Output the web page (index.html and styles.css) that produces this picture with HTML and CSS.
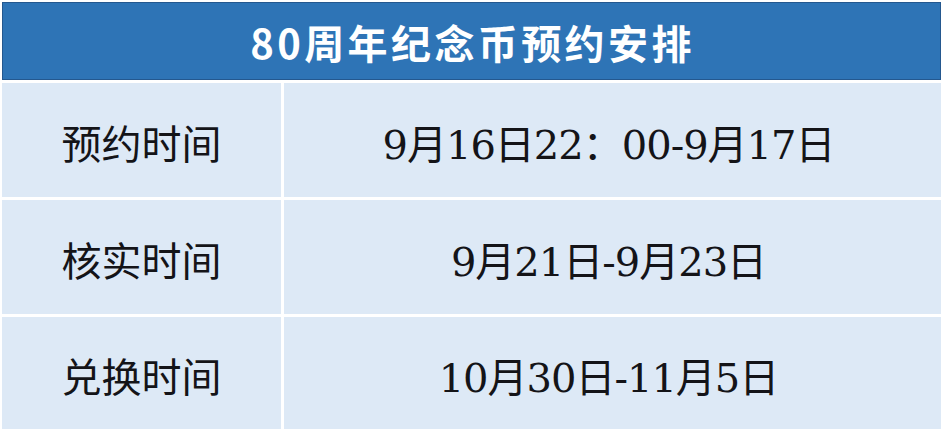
FILE: index.html
```html
<!DOCTYPE html>
<html lang="zh">
<head>
<meta charset="utf-8">
<title>80周年纪念币预约安排</title>
<link rel="stylesheet" href="styles.css">
</head>
<body>
<div class="table">
  <div class="header">80周年纪念币预约安排</div>
  <div class="cell label">预约时间</div>
  <div class="cell value">9月16日22：00-9月17日</div>
  <div class="cell label">核实时间</div>
  <div class="cell value">9月21日-9月23日</div>
  <div class="cell label">兑换时间</div>
  <div class="cell value">10月30日-11月5日</div>
</div>
</body>
</html>
```
FILE: styles.css
```css
html, body {
  margin: 0;
  padding: 0;
  background: #ffffff;
}
body {
  width: 944px;
  height: 432px;
  overflow: hidden;
}
.table {
  margin: 2px 0 0 2px;
  width: 939px;
  display: grid;
  grid-template-columns: 279px 657px;
  grid-template-rows: 78px 114px 114px 112px;
  column-gap: 3px;
  row-gap: 3px;
}
.header {
  grid-column: 1 / 3;
  background: #2e74b6;
  border: 1px solid #24588f;
  box-sizing: border-box;
  color: #ffffff;
  font-family: "Noto Sans CJK SC", sans-serif;
  font-weight: 700;
  font-size: 40px;
  letter-spacing: 3.4px;
  display: flex;
  align-items: center;
  justify-content: center;
  padding-left: 2px;
  padding-top: 2px;
}
.cell {
  background: #dde9f6;
  color: #141418;
  display: flex;
  align-items: center;
  justify-content: center;
  padding-top: 4px;
  box-sizing: border-box;
}
.label {
  font-family: "Noto Sans CJK SC", sans-serif;
  font-size: 40px;
}
.value {
  font-family: "DejaVu Serif", "Noto Sans CJK SC", serif;
  font-size: 40px;
  letter-spacing: -1px;
  padding-right: 8px;
}
```
